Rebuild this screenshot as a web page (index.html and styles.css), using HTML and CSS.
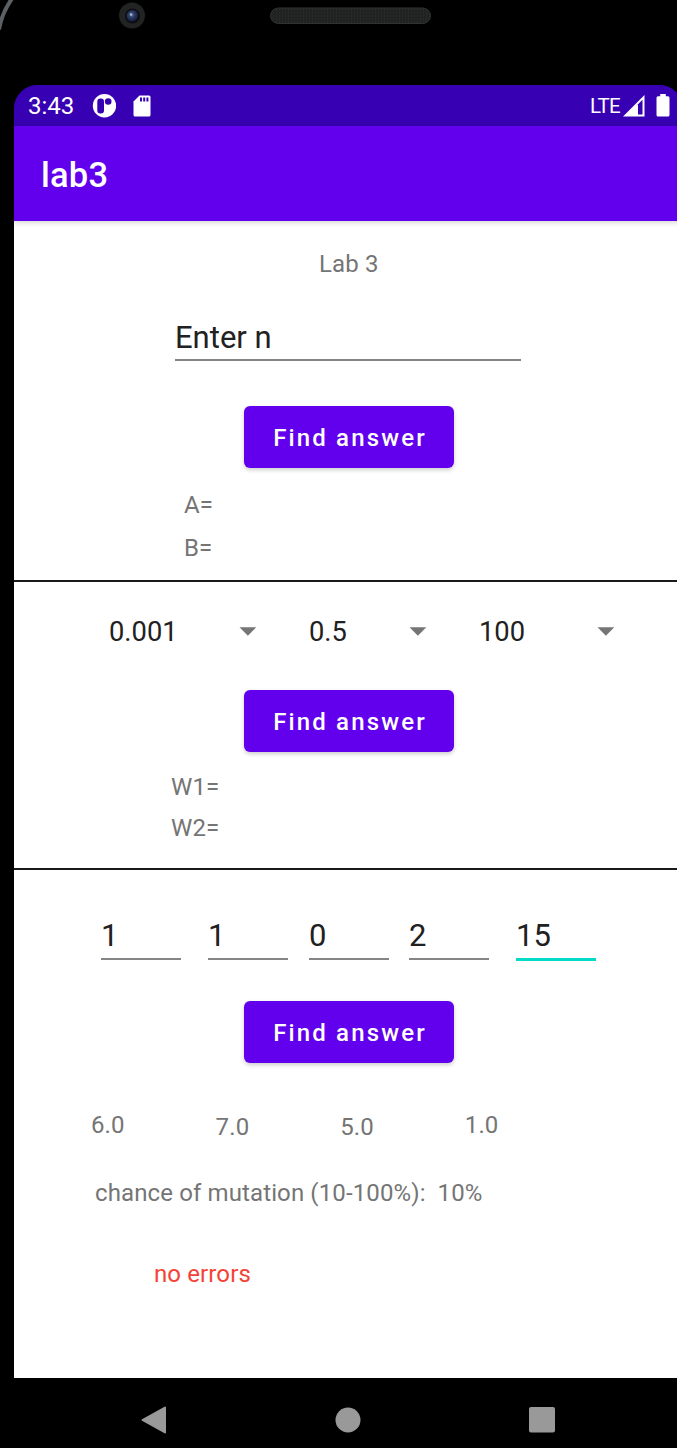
FILE: index.html
```html
<!DOCTYPE html>
<html lang="en">
<head>
<meta charset="utf-8">
<title>lab3</title>
<link rel="stylesheet" href="styles.css">
</head>
<body>
<div class="device">
  <svg class="bezel" width="677" height="84" viewBox="0 0 677 84">
    <defs>
      <pattern id="mesh" width="3" height="3" patternUnits="userSpaceOnUse">
        <rect width="3" height="3" fill="#1e2020"/><rect width="1" height="1" fill="#343737"/><rect x="1.5" y="1.5" width="1" height="1" fill="#2b2e2e"/>
      </pattern>
      <radialGradient id="lens" cx=".42" cy=".4" r=".6">
        <stop offset="0" stop-color="#7f93bd"/><stop offset=".3" stop-color="#33456f"/><stop offset=".8" stop-color="#1a2444"/><stop offset="1" stop-color="#0b0e18"/>
      </radialGradient>
    </defs>
    <path d="M-1 29C1 17 5 8 12 -2" fill="none" stroke="#5c6064" stroke-width="4"/>
    <circle cx="132" cy="15" r="13" fill="#222323"/>
    <circle cx="132.500" cy="15.500" r="7.500" fill="#0b0d14"/>
    <circle cx="132.500" cy="15.500" r="6" fill="url(#lens)"/>
    <circle cx="131" cy="14" r="1.200" fill="#a4b3cd"/>
    <rect x="270.500" y="7.500" width="160" height="15.500" rx="7.750" fill="url(#mesh)" stroke="#303232"/>
  </svg>
  <div class="screen">
    <div class="status">
      <span class="clock">3:43</span>
      <svg class="app-icon" width="24" height="24" viewBox="0 0 24 24">
        <circle cx="12.500" cy="11.700" r="11.700" fill="#fff"/>
        <rect x="5.300" y="4.500" width="6.700" height="15" rx="3" fill="#3700b3"/>
        <circle cx="16.200" cy="7.500" r="3.300" fill="#3700b3"/>
      </svg>
      <svg class="sd-icon" width="18" height="22" viewBox="0 0 18 22">
        <path d="M6.500 .5H16Q17.500 .5 17.500 2V20Q17.500 21.500 16 21.500H2Q.5 21.500 .5 20V6.500Z" fill="#fff"/>
        <path d="M7 2.500h2v4H7zM10.200 2.500h2v4h-2zM13.400 2.500h2v4h-2z" fill="#3700b3"/>
      </svg>
      <span class="network">LTE</span>
      <svg class="signal" width="22" height="22" viewBox="0 0 22 22">
        <path d="M21.500 0V21.500H0Z" fill="#fff"/><path d="M15 9.200L19.500 4.700V19.500H15Z" fill="#3700b3"/>
      </svg>
      <svg class="battery" width="14" height="23" viewBox="0 0 14 23">
        <path d="M4.200 0H9.800V2.300H12Q13.500 2.300 13.500 3.800V21Q13.500 22.500 12 22.500H2Q.5 22.500 .5 21V3.800Q.5 2.300 2 2.300H4.200Z" fill="#fff"/>
      </svg>
    </div>
    <header class="appbar">lab3</header>
    <main class="content">
      <section class="part factor">
        <p class="label title">Lab 3</p>
        <div class="field wide">Enter n</div>
        <button class="button">Find answer</button>
        <div class="results">
          <p class="label">A=</p>
          <p class="label">B=</p>
        </div>
      </section>
      <section class="part perceptron">
        <div class="spinners">
          <div class="spinner rate">0.001<svg class="caret" width="18" height="9" viewBox="0 0 18 9"><path d="M.5 .2H17.300L8.900 8.700Z" fill="#757575"/></svg></div>
          <div class="spinner time">0.5<svg class="caret" width="18" height="9" viewBox="0 0 18 9"><path d="M.5 .2H17.300L8.900 8.700Z" fill="#757575"/></svg></div>
          <div class="spinner count">100<svg class="caret" width="18" height="9" viewBox="0 0 18 9"><path d="M.5 .2H17.300L8.900 8.700Z" fill="#757575"/></svg></div>
        </div>
        <button class="button">Find answer</button>
        <div class="results weights">
          <p class="label">W1=</p>
          <p class="label">W2=</p>
        </div>
      </section>
      <section class="part genetic">
        <div class="inputs">
          <div class="field">1</div>
          <div class="field">1</div>
          <div class="field">0</div>
          <div class="field">2</div>
          <div class="field focused">15</div>
        </div>
        <button class="button">Find answer</button>
        <div class="answers">
          <p class="label">6.0</p>
          <p class="label lower">7.0</p>
          <p class="label lower">5.0</p>
          <p class="label">1.0</p>
        </div>
        <div class="mutation">
          <p class="label">chance of mutation (10-100%):</p>
          <p class="label">10%</p>
        </div>
        <p class="label error">no errors</p>
      </section>
    </main>
  </div>
  <nav class="navbar">
    <svg width="26" height="28" viewBox="0 0 26 28"><path d="M1.500 14L24 1.500V26.500Z" fill="#999" stroke="#999" stroke-width="2" stroke-linejoin="round"/></svg>
    <svg width="26" height="26" viewBox="0 0 26 26"><circle cx="13" cy="13" r="12.500" fill="#999"/></svg>
    <svg width="26" height="26" viewBox="0 0 26 26"><rect width="26" height="25.500" rx="2" fill="#999"/></svg>
  </nav>
</div>
</body>
</html>
```
FILE: styles.css
```css
* {
  box-sizing: border-box;
}

body {
  margin: 0;
  background: #000;
  font-family: Roboto, sans-serif;
}

p {
  margin: 0;
}

.device {
  width: 677px;
  height: 1448px;
  overflow: hidden;
  background: #000;
}

.bezel {
  display: block;
  height: 85px;
}

.screen {
  width: 669px;
  height: 1293px;
  margin-left: 14px;
  overflow: hidden;
  border-radius: 24px 24px 0 0;
  background: linear-gradient(#3700b3 41px, #fff 41px);
}

.status {
  display: flex;
  align-items: center;
  height: 41px;
  padding-left: 14px;
  background: #3700b3;
  color: #fff;
}

.clock {
  width: 64px;
  font-size: 24px;
  line-height: 28px;
  padding-top: 1px;
}

.sd-icon {
  margin-left: 17px;
}

.network {
  width: 33px;
  margin-left: 439px;
  font-size: 20.5px;
  line-height: 28px;
  letter-spacing: -0.7px;
}

.battery {
  margin-left: 11px;
}

.appbar {
  height: 95px;
  padding-left: 27px;
  background: #6200ee;
  box-shadow: 0 1px 6px rgba(0, 0, 0, 0.2);
  color: #fff;
  font-size: 34.5px;
  font-weight: 500;
  letter-spacing: 0.2px;
  line-height: 99px;
}

.part {
  display: flex;
  flex-direction: column;
  align-items: flex-start;
}

.label {
  color: #757575;
  font-size: 24px;
  line-height: 28px;
  letter-spacing: 0.12px;
  white-space: nowrap;
}

.factor {
  height: 361px;
  padding-top: 29px;
  border-bottom: 2px solid #1a1a1a;
}

.title {
  margin-left: 305px;
}

.field {
  width: 80px;
  height: 43px;
  padding-top: 1px;
  border-bottom: 2px solid #858585;
  color: #212121;
  font-size: 31px;
  line-height: 36px;
}

.wide {
  width: 346px;
  margin: 40px 0 0 161px;
  padding-top: 2px;
}

.button {
  width: 210px;
  height: 62px;
  margin-left: 230px;
  padding: 2px 0 0 2px;
  border: 0;
  border-radius: 6px;
  background: #6200ee;
  box-shadow: 0 2px 4px rgba(0, 0, 0, 0.2);
  color: #fff;
  font: 500 24px/28px Roboto, sans-serif;
  letter-spacing: 2.14px;
}

.factor .button {
  margin-top: 45px;
}

.results {
  display: flex;
  flex-direction: column;
  gap: 15px;
  margin: 23px 0 0 170px;
}

.perceptron {
  height: 288px;
  padding-top: 34px;
  border-bottom: 2px solid #1a1a1a;
}

.spinners {
  display: flex;
  gap: 52px;
  margin-left: 95px;
}

.spinner {
  display: flex;
  align-items: center;
  justify-content: space-between;
  height: 32px;
  padding-top: 1px;
  color: #212121;
  font-size: 27.3px;
  line-height: 33px;
}

.caret {
  margin-bottom: 2px;
}

.rate {
  width: 148px;
}

.time {
  width: 118px;
}

.count {
  width: 136px;
}

.perceptron .button {
  margin-top: 42px;
}

.weights {
  gap: 13px;
  margin: 21px 0 0 157px;
}

.genetic {
  padding-top: 47px;
}

.inputs {
  display: grid;
  grid-template-columns: 107px 101px 100px 107px 80px;
  margin-left: 87px;
}

.focused {
  height: 44px;
  border-bottom: 3px solid #03dac5;
}

.genetic .button {
  margin-top: 40px;
}

.answers {
  display: grid;
  grid-template-columns: repeat(3, 124.6px) auto;
  margin: 48px 0 0 77px;
}

.lower {
  padding-top: 2px;
}

.mutation {
  display: flex;
  gap: 12px;
  margin: 38px 0 0 81px;
}

.error {
  margin: 53px 0 0 140px;
  color: #f44336;
}

.navbar {
  display: flex;
  align-items: center;
  gap: 168px;
  height: 70px;
  padding: 13px 0 0 141px;
}
```
